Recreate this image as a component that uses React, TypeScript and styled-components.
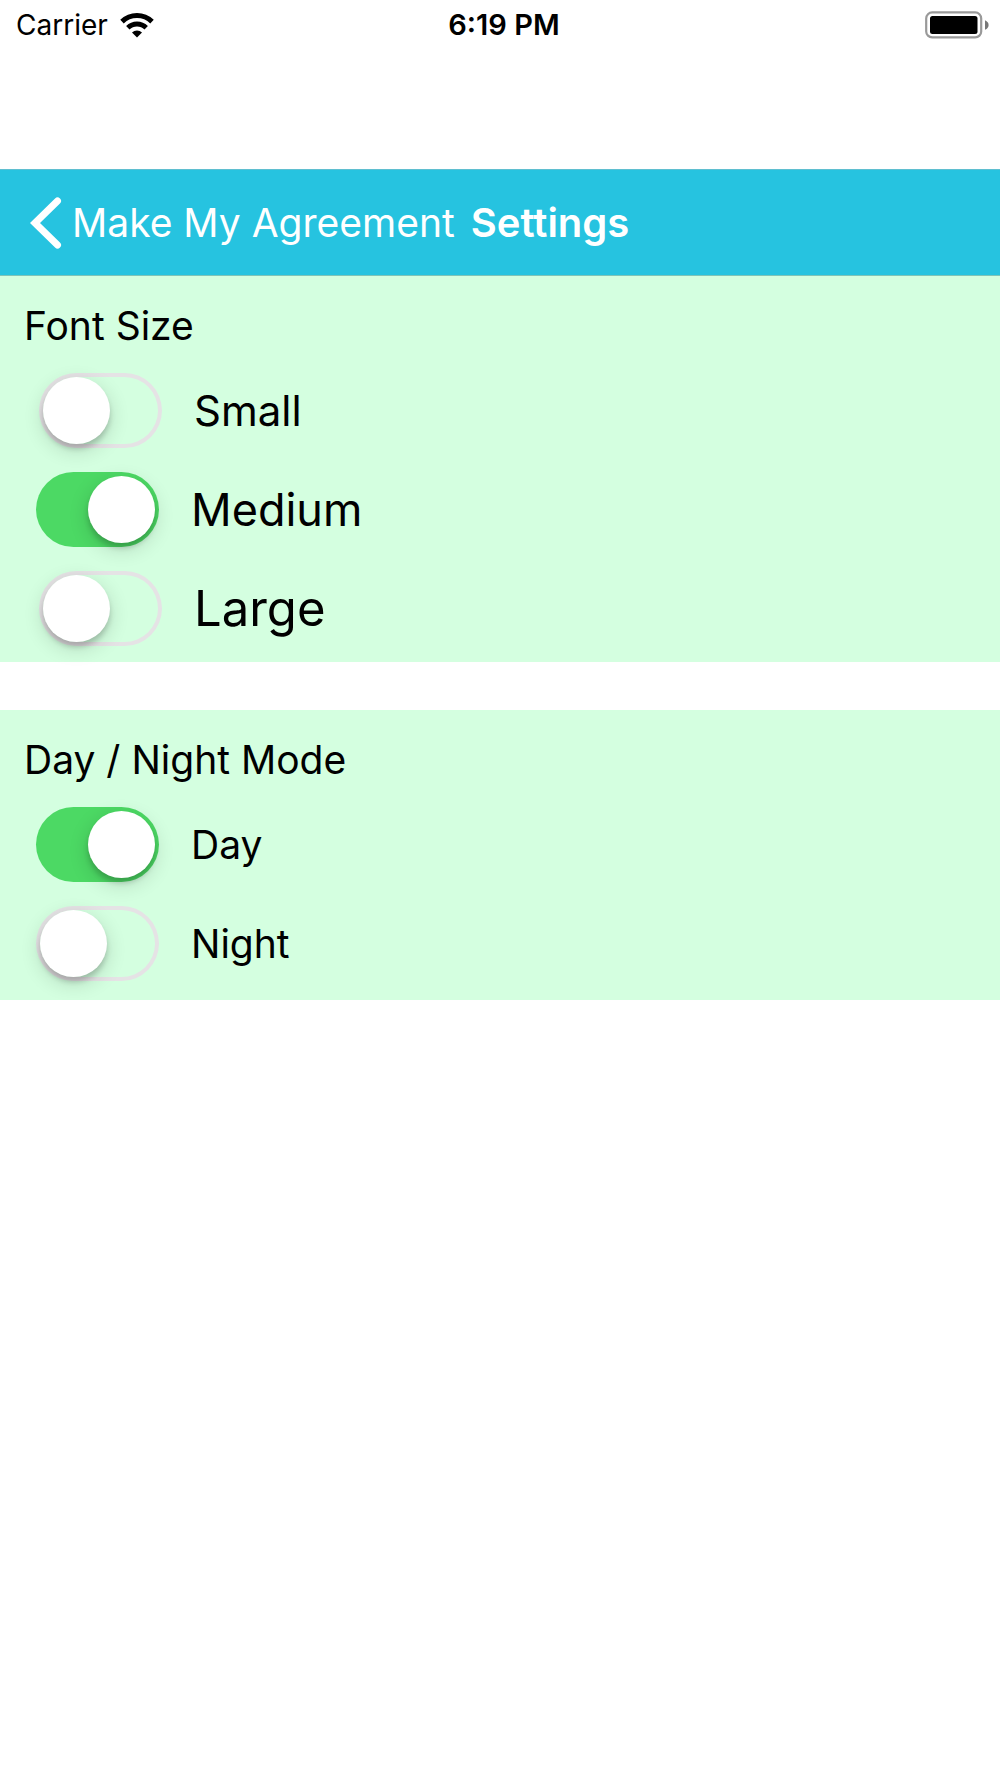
import React, { useId, useState } from "react";
import styled, { createGlobalStyle } from "styled-components";

const GlobalStyle = createGlobalStyle`
  *, *::before, *::after { box-sizing: border-box; }
  body {
    margin: 0;
    background: #ffffff;
    color: #000000;
    font-family: Inter, "Liberation Sans", sans-serif;
  }
`;

const Screen = styled.div`
  display: flex;
  flex-direction: column;
`;

const StatusBar = styled.div`
  display: grid;
  grid-template-columns: 1fr auto 1fr;
  align-items: center;
  height: 50px;
  padding: 0 8px 0 16px;
  margin-bottom: 119px;
  font-size: 28px;
  line-height: 50px;
`;

const Carrier = styled.div`
  display: flex;
  align-items: center;
  gap: 12px;
`;

const Clock = styled.time`
  font-size: 29px;
  font-weight: 600;
`;

const BatteryIcon = styled.svg`
  justify-self: end;
`;

const Header = styled.header`
  display: flex;
  align-items: center;
  gap: 16px;
  height: 107px;
  padding: 0 30px;
  background: #26c3e0;
  border-top: 1px solid #5fbfd0;
  border-bottom: 1px solid #7fc4b8;
  color: #ffffff;
  font-size: 39px;
  line-height: 48px;
`;

const BackLink = styled.a`
  display: flex;
  align-items: center;
  gap: 10px;
  color: inherit;
  text-decoration: none;
`;

const PageTitle = styled.h1`
  margin: 0;
  font-size: 40px;
  font-weight: 600;
`;

const Main = styled.main`
  display: flex;
  flex-direction: column;
  gap: 48px;
`;

const Group = styled.fieldset<{ $bottom: number }>`
  display: flex;
  flex-direction: column;
  min-width: 0;
  margin: 0;
  padding: 0 24px ${(p) => p.$bottom}px;
  border: 0;
  background: #d4ffe0;
`;

const GroupTitle = styled.legend`
  float: left;
  padding: 26px 0 11px;
  font-size: 39px;
  line-height: 48px;
`;

const OptionRow = styled.div<{ $inset: number }>`
  display: flex;
  align-items: center;
  gap: 32px;
  height: 99px;
  padding-left: ${(p) => p.$inset}px;
`;

const Switch = styled.input`
  appearance: none;
  flex: none;
  width: 123px;
  height: 75px;
  margin: 0;
  padding: 4px;
  border-radius: 38px;
  box-shadow: inset 0 0 0 4px #e5e3e5;
  cursor: pointer;

  &::before {
    content: "";
    display: block;
    width: 67px;
    height: 67px;
    border-radius: 50%;
    background: #ffffff;
    box-shadow: 0 5px 5px rgba(0, 0, 0, 0.16), 0 6px 20px rgba(0, 0, 0, 0.16);
  }

  &:checked {
    background: #4cd964;
    box-shadow: none;
  }

  &:checked::before {
    margin-left: auto;
  }
`;

const OptionLabel = styled.label<{ $size: number }>`
  font-size: ${(p) => p.$size}px;
  line-height: 60px;
  cursor: pointer;
`;

interface Option {
  label: string;
  size: number;
  inset: number;
}

interface SettingGroupProps {
  title: string;
  options: Option[];
  initial: string;
  bottom: number;
}

function SettingGroup({ title, options, initial, bottom }: SettingGroupProps) {
  const id = useId();
  const [selected, setSelected] = useState(initial);
  return (
    <Group $bottom={bottom}>
      <GroupTitle>{title}</GroupTitle>
      {options.map((option) => (
        <OptionRow key={option.label} $inset={option.inset}>
          <Switch
            type="radio"
            id={id + option.label}
            name={id}
            checked={selected === option.label}
            onChange={() => setSelected(option.label)}
          />
          <OptionLabel htmlFor={id + option.label} $size={option.size}>
            {option.label}
          </OptionLabel>
        </OptionRow>
      ))}
    </Group>
  );
}

const fontSizes: Option[] = [
  { label: "Small", size: 42, inset: 15 },
  { label: "Medium", size: 45, inset: 12 },
  { label: "Large", size: 49, inset: 15 },
];

const modes: Option[] = [
  { label: "Day", size: 39, inset: 12 },
  { label: "Night", size: 39, inset: 12 },
];

export default function App() {
  return (
    <Screen>
      <GlobalStyle />
      <StatusBar>
        <Carrier>
          <span>Carrier</span>
          <svg width="34" height="25" viewBox="0 0 34 25" aria-hidden="true">
            <path d="M2 8.600a21.500 21.500 0 0 1 30 0" fill="none" stroke="#000" strokeWidth="5" />
            <path d="M7.800 14.800a13 13 0 0 1 18.400 0" fill="none" stroke="#000" strokeWidth="4.800" />
            <path d="M17 24.500l-5-5.100a7.200 7.200 0 0 1 10 0z" fill="#000" />
          </svg>
        </Carrier>
        <Clock>6:19 PM</Clock>
        <BatteryIcon width="67" height="28" viewBox="0 0 67 28" aria-hidden="true">
          <rect x="1.200" y="1.400" width="55" height="25" rx="6" fill="none" stroke="#999" strokeWidth="2.200" />
          <rect x="5" y="5" width="47.500" height="18" rx="2.500" fill="#000" />
          <path d="M60 9.200c2.400 1 3.600 2.800 3.600 4.800s-1.200 3.800-3.600 4.800z" fill="#777" />
        </BatteryIcon>
      </StatusBar>
      <Header>
        <BackLink href="#">
          <svg width="32" height="54" viewBox="0 0 32 54" aria-hidden="true">
            <path
              d="M27.500 5L5 27l22.500 22"
              fill="none"
              stroke="#fff"
              strokeWidth="7"
              strokeLinecap="round"
            />
          </svg>
          <span>Make My Agreement</span>
        </BackLink>
        <PageTitle>Settings</PageTitle>
      </Header>
      <Main>
        <SettingGroup title="Font Size" options={fontSizes} initial="Medium" bottom={4} />
        <SettingGroup title="Day / Night Mode" options={modes} initial="Day" bottom={7} />
      </Main>
    </Screen>
  );
}
